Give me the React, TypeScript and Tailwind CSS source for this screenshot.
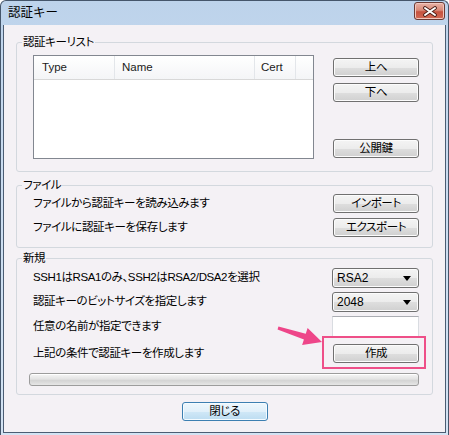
import React from 'react';

// Windows 7 style push button look
const buttonBase =
  'flex items-center justify-center rounded-[3px] border border-[#707070] bg-[linear-gradient(to_bottom,#f4f4f4_0%,#ececec_50%,#dedede_51%,#d0d0d0_100%)] shadow-[inset_0_0_0_1px_#fcfcfc] text-[11.5px] leading-none text-black';

const Button = ({ children, className = '' }: { children: React.ReactNode; className?: string }) => (
  <div className={`${buttonBase} h-[19px] w-[86px] ${className}`}>{children}</div>
);

const Select = ({ value }: { value: string }) => (
  <div className="flex h-[20px] w-[87px] items-center justify-between rounded-[3px] border border-[#707070] bg-[linear-gradient(to_bottom,#f4f4f4_0%,#ececec_50%,#dedede_51%,#d0d0d0_100%)] pl-[4px] pr-[7px] shadow-[inset_0_0_0_1px_#fcfcfc] text-[12px] leading-none tracking-normal">
    <span>{value}</span>
    <svg width="8" height="5" viewBox="0 0 8 5">
      <path d="M0 0h8L4 5z" fill="#000" />
    </svg>
  </div>
);

const Group = ({ title, className = '', children }: { title: string; className?: string; children: React.ReactNode }) => (
  <fieldset className={`mx-[12px] rounded-[3px] border border-[#d3d8de] ${className}`}>
    <legend className="ml-[5px] h-[14px] px-[1px] text-[11.5px] leading-[14px]">{title}</legend>
    {children}
  </fieldset>
);

const Row = ({ label, children, h = 'h-[19px]' }: { label: string; children: React.ReactNode; h?: string }) => (
  <div className={`flex items-center justify-between ${h}`}>
    <span className="text-[11.5px] leading-none">{label}</span>
    {children}
  </div>
);

const CloseButton = () => (
  <div className="mt-[1px] self-start flex h-[18px] w-[31px] items-center justify-center rounded-[3px] border border-[#6b3a34] bg-[linear-gradient(to_bottom,#e8b2a6_0%,#d98a78_45%,#c5523f_55%,#d26a55_100%)] shadow-[inset_0_0_0_1px_#f1c7bd]">
    <svg width="16" height="11" viewBox="0 0 16 11">
      <path d="M3 2l10 7M13 2L3 9" stroke="#4a1d16" strokeWidth="3.8" strokeLinecap="round" />
      <path d="M3 2l10 7M13 2L3 9" stroke="#ffffff" strokeWidth="2" strokeLinecap="round" />
    </svg>
  </div>
);

const KeyList = () => (
  <div className="h-[104px] w-[281px] border border-[#828790] bg-white">
    <div className="flex h-[24px] border-b border-[#d8d8d8] bg-[linear-gradient(to_bottom,#ffffff,#f4f5f7)] text-[11.5px] tracking-normal text-[#1a1a1a]">
      <div className="flex w-[81px] items-center border-r border-[#e3e6ea] pl-[8px]">Type</div>
      <div className="flex w-[140px] items-center border-r border-[#e3e6ea] pl-[7px]">Name</div>
      <div className="flex w-[41px] items-center border-r border-[#e3e6ea] pl-[6px]">Cert</div>
    </div>
  </div>
);

export default function App() {
  return (
    <div className="relative h-[435px] w-[449px] bg-white tracking-[-0.4px] text-black [font-family:'Liberation_Sans','Noto_Sans_CJK_JP',sans-serif] [font-feature-settings:'palt']">
      <div className="flex h-full flex-col rounded-t-[6px] border border-b-0 border-[#45566b] bg-[linear-gradient(to_bottom,#bdd3eb,#cadcf0_40%,#d3e3f3)] px-[2px] pb-[2px]">
        <div className="flex h-[24px] items-center justify-between pl-[5px] pr-[1px]">
          <span className="text-[12.5px] leading-none tracking-normal [font-feature-settings:normal]">認証キー</span>
          <CloseButton />
        </div>

        <div className="flex flex-1 flex-col border border-t-0 border-[#4c5d73] bg-[#f4f1f5]">
          <Group title="認証キーリスト" className="mt-[10px]">
            <div className="flex justify-between pb-[12px] pl-[16px] pr-[13px] pt-[6px]">
              <KeyList />
              <div className="flex flex-col pt-[3px]">
                <Button>上へ</Button>
                <Button className="mt-[6px]">下へ</Button>
                <Button className="mt-[37px]">公開鍵</Button>
              </div>
            </div>
          </Group>

          <Group title="ファイル" className="mt-[6px]">
            <div className="flex flex-col gap-[5px] pb-[10px] pl-[16px] pr-[13px] pt-[2px]">
              <Row label="ファイルから認証キーを読み込みます">
                <Button>インポート</Button>
              </Row>
              <Row label="ファイルに認証キーを保存します">
                <Button>エクスポート</Button>
              </Row>
            </div>
          </Group>

          <Group title="新規" className="mt-[3px]">
            <div className="flex flex-col pb-[8px] pr-[13px] pt-[3px]">
              <div className="flex flex-col gap-[4px] pl-[16px]">
                <Row label="SSH1はRSA1のみ、SSH2はRSA2/DSA2を選択" h="h-[20px]">
                  <Select value="RSA2" />
                </Row>
                <Row label="認証キーのビットサイズを指定します" h="h-[20px]">
                  <Select value="2048" />
                </Row>
                <Row label="任意の名前が指定できます" h="h-[21px]">
                  <div className="h-[21px] w-[87px] border border-[#d9dce1] border-t-[#abadb3] bg-white" />
                </Row>
              </div>
              <div className="mt-[7px] pl-[16px]">
                <Row label="上記の条件で認証キーを作成します">
                  <Button>作成</Button>
                </Row>
              </div>
              <div className="ml-[12px] mt-[10px] h-[13px] rounded-[3px] border border-[#9c9c9c] bg-[linear-gradient(to_bottom,#f6f6f6,#e4e4e4_45%,#d4d4d4_60%,#e6e6e6)] shadow-[inset_0_1px_0_#ffffff]" />
            </div>
          </Group>

          <div className="mt-[7px] flex justify-center">
            <div className="flex h-[19px] w-[86px] items-center justify-center rounded-[3px] border border-[#3c7fb1] bg-[linear-gradient(to_bottom,#eef7fc_0%,#e1f0fa_50%,#d0e8f7_51%,#bcdcf1_100%)] shadow-[inset_0_0_0_1px_#f4fbff] text-[11.5px] leading-none">
              閉じる
            </div>
          </div>
        </div>
      </div>

      {/* callout on the create button */}
      <div className="absolute left-[322px] top-[336px] h-[33px] w-[104px] border-2 border-[#ee4f88]" />
      <svg className="absolute left-[270px] top-[320px]" width="60" height="32" viewBox="0 0 60 32">
        <polygon
          points="8.45,6.57 35.76,13.69 37.6,7.97 52,22 32.1,25.1 33.94,19.41 7.55,9.43"
          fill="#ee4689"
        />
      </svg>
    </div>
  );
}
